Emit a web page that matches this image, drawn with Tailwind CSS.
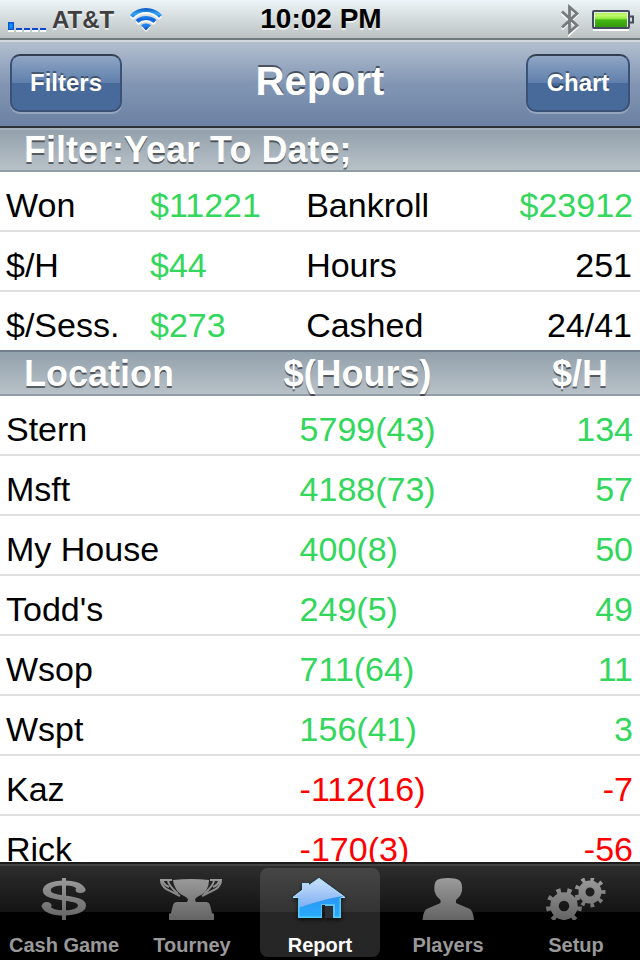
<!DOCTYPE html>
<html lang="en">
<head>
<meta charset="utf-8">
<meta name="viewport" content="width=device-width, initial-scale=1">
<title>Report</title>
<script src="https://cdn.jsdelivr.net/npm/@tailwindcss/browser@4"></script>
</head>
<body class="flex h-screen flex-col overflow-hidden bg-white font-['Liberation_Sans',Arial,sans-serif] text-black">

<!-- Status bar -->
<div class="grid h-10 shrink-0 grid-cols-[1fr_auto_1fr] items-center border-b-2 border-[#6f7b7e] bg-linear-to-b from-[#edf5f8] to-[#bcc2c2] pr-1.5 pl-2 font-bold [text-shadow:0_2px_0_rgba(255,255,255,.6)]">
  <div class="flex items-center">
    <svg class="h-10 w-10" viewBox="0 0 40 40" role="img" aria-label="Signal strength">
      <path d="M0 31h6M8 31h6M16 31h6M24 31h6M32 31h6" stroke="#fff" stroke-width="2"/>
      <path d="M8 29h6M16 29h6M24 29h6M32 29h6" stroke="#0b46cf" stroke-width="2"/>
      <path d="M.75 22.75h4.500v6.500H.75z" fill="#1497ff" stroke="#0b57d5" stroke-width="1.500"/>
    </svg>
    <span class="ml-1 text-2xl text-[#3f3f3f]">AT&amp;T</span>
    <svg class="ml-3.5 h-10 w-9" viewBox="0 0 36 40" role="img" aria-label="Wi-Fi">
      <defs><linearGradient id="wifi" gradientUnits="userSpaceOnUse" x1="0" y1="8" x2="0" y2="31"><stop offset="0" stop-color="#0a55c0"/><stop offset=".25" stop-color="#31a4f5"/><stop offset=".5" stop-color="#1263df"/><stop offset=".75" stop-color="#1e86f4"/><stop offset="1" stop-color="#0a3fc4"/></linearGradient></defs>
      <g transform="translate(0 2)" fill="none" stroke="#fff" stroke-width="4"><path d="M3.500 16.300a20 20 0 0 1 29 0"/><path d="M9 21.500a13 13 0 0 1 18 0"/><path d="M18 30l-4.500-4.800a7 7 0 0 1 9 0z" fill="#fff" stroke="none"/></g>
      <g fill="none" stroke="url(#wifi)" stroke-width="4"><path d="M3.500 16.300a20 20 0 0 1 29 0"/><path d="M9 21.500a13 13 0 0 1 18 0"/><path d="M18 30.500l-5-5.200a7.500 7.500 0 0 1 10 0z" fill="url(#wifi)" stroke="none"/></g>
    </svg>
  </div>
  <time class="pb-0.5 text-[28px] leading-9">10:02 PM</time>
  <div class="flex items-center justify-end gap-3">
    <svg class="h-10 w-5" viewBox="0 0 20 40" fill="none" stroke-width="2.800" role="img" aria-label="Bluetooth">
      <path d="M2 13.500L17 27 9.500 34V8L17 14.500 2 29" stroke="#fff"/>
      <path d="M2 11.500L17 25.500 9.500 32V7L17 13.500 2 27.500" stroke="#777a7c"/>
    </svg>
    <svg class="h-10 w-[42px]" viewBox="0 0 42 40" role="img" aria-label="Battery">
      <defs><linearGradient id="battery" x1="0" y1="0" x2="0" y2="1"><stop offset="0" stop-color="#a7ef4f"/><stop offset=".15" stop-color="#c5fa72"/><stop offset=".4" stop-color="#91ea3d"/><stop offset=".5" stop-color="#45b716"/><stop offset="1" stop-color="#349b0d"/></linearGradient></defs>
      <path d="M1 30h36" stroke="#fff" stroke-width="2"/>
      <path d="M38 16.500h3v6h-3" fill="none" stroke="#454c5c" stroke-width="2"/>
      <rect x="1" y="11" width="36" height="17" rx="1" fill="#e5efe4" stroke="#454a61" stroke-width="2"/>
      <rect x="3" y="13" width="32" height="14" fill="url(#battery)"/>
    </svg>
  </div>
</div>

<!-- Navigation bar -->
<header class="grid h-22 shrink-0 grid-cols-[1fr_auto_1fr] items-center border-t-2 border-b-2 border-t-[#d0d7df] border-b-[#2d3034] bg-linear-to-b from-[#b3bfcf] via-[#8296b4] to-[#6c81a3] px-2.5 pb-0.5 font-bold text-white">
  <button type="button" class="h-[58px] w-28 justify-self-start rounded-[10px] border-2 border-[#395275] border-t-[#333e50] bg-linear-to-b from-[#90a6c4] from-0% via-[#5f7fac] via-50% to-[#486a9b] to-50% text-2xl shadow-[0_2px_0_rgba(255,255,255,.25)] [text-shadow:0_-2px_0_rgba(0,0,0,.4)]">Filters</button>
  <h1 class="pb-1 text-[40px] leading-none [text-shadow:0_-2px_0_rgba(0,0,0,.5)]">Report</h1>
  <button type="button" class="h-[58px] w-[104px] justify-self-end rounded-[10px] border-2 border-[#395275] border-t-[#333e50] bg-linear-to-b from-[#90a6c4] from-0% via-[#5f7fac] via-50% to-[#486a9b] to-50% text-2xl shadow-[0_2px_0_rgba(255,255,255,.25)] [text-shadow:0_-2px_0_rgba(0,0,0,.4)]">Chart</button>
</header>

<main class="min-h-0 flex-1 overflow-hidden text-[34px] leading-10">
  <h2 class="h-11 border-t-2 border-b-2 border-t-[#a5b1bb] border-b-[#929da8] bg-linear-to-b from-[#93a1ac] to-[#b8c1c8] pl-6 text-4xl leading-10 font-bold text-white [text-shadow:0_2px_0_rgba(0,0,0,.5)]">Filter:Year To Date;</h2>

  <table class="w-full table-fixed border-separate border-spacing-0 [&_td]:border-[#e0e0e0] [&_td]:pt-2 [&_th]:border-[#e0e0e0] [&_th]:pt-2 [&_th]:pl-1.5 [&_th]:text-left [&_th]:font-normal" aria-label="Summary">
    <colgroup><col class="w-[22.5%]"><col class="w-[24.4%]"><col class="w-[25%]"><col></colgroup>
    <tbody>
      <tr class="h-15 *:border-b-2">
        <th scope="row">Won</th><td class="pl-1.5 text-[#32d75c]">$11221</td>
        <th scope="row">Bankroll</th><td class="pr-[7px] text-right text-[#32d75c]">$23912</td>
      </tr>
      <tr class="h-15 *:border-b-2">
        <th scope="row">$/H</th><td class="pl-1.5 text-[#32d75c]">$44</td>
        <th scope="row">Hours</th><td class="pr-2 text-right">251</td>
      </tr>
      <tr class="h-[58px]">
        <th scope="row">$/Sess.</th><td class="pl-1.5 text-[#32d75c]">$273</td>
        <th scope="row">Cashed</th><td class="pr-2 text-right">24/41</td>
      </tr>
    </tbody>
  </table>

  <table class="w-full table-fixed border-separate border-spacing-0" aria-label="Results by location">
    <colgroup><col class="w-[44%]"><col class="w-[34%]"><col></colgroup>
    <thead class="text-4xl leading-10 text-white [text-shadow:0_2px_0_rgba(0,0,0,.5)]">
      <tr class="h-[46px] *:border-t-2 *:border-b-2 *:border-t-[#71808b] *:border-b-[#929da8] *:bg-linear-to-b *:from-[#93a1ac] *:to-[#b8c1c8] *:pt-0.5">
        <th scope="col" class="pl-6 text-left font-bold">Location</th>
        <th scope="col" class="pl-0.5 text-left font-bold">$(Hours)</th>
        <th scope="col" class="pr-8 text-right font-bold">$/H</th>
      </tr>
    </thead>
    <tbody class="text-[#32d75c] [&_td]:border-b-2 [&_td]:border-[#e0e0e0] [&_td]:pt-2 [&_th]:border-b-2 [&_th]:border-[#e0e0e0] [&_th]:pt-2 [&_th]:pl-1.5 [&_th]:text-left [&_th]:font-normal [&_th]:text-black">
      <tr class="h-15"><th scope="row">Stern</th><td class="pl-[18px]">5799(43)</td><td class="pr-[7px] text-right">134</td></tr>
      <tr class="h-15"><th scope="row">Msft</th><td class="pl-[18px]">4188(73)</td><td class="pr-[7px] text-right">57</td></tr>
      <tr class="h-15"><th scope="row">My House</th><td class="pl-[18px]">400(8)</td><td class="pr-[7px] text-right">50</td></tr>
      <tr class="h-15"><th scope="row">Todd's</th><td class="pl-[18px]">249(5)</td><td class="pr-[7px] text-right">49</td></tr>
      <tr class="h-15"><th scope="row">Wsop</th><td class="pl-[18px]">711(64)</td><td class="pr-[7px] text-right">11</td></tr>
      <tr class="h-15"><th scope="row">Wspt</th><td class="pl-[18px]">156(41)</td><td class="pr-[7px] text-right">3</td></tr>
      <tr class="h-15 text-[#ff0000]"><th scope="row">Kaz</th><td class="pl-[18px]">-112(16)</td><td class="pr-[7px] text-right">-7</td></tr>
      <tr class="h-15 text-[#ff0000]"><th scope="row">Rick</th><td class="pl-[18px]">-170(3)</td><td class="pr-[7px] text-right">-56</td></tr>
    </tbody>
  </table>
</main>

<!-- Tab bar -->
<nav class="grid h-[98px] shrink-0 grid-cols-5 border-t-2 border-[#1c1c1c] bg-linear-to-b from-[#2e2e2e] from-0% via-[#141414] via-50% to-black to-50% text-xl leading-6 font-bold text-[#999] shadow-[inset_0_2px_0_#434343]">
  <a href="#cash" class="m-1 flex flex-col items-center pt-2.5">
    <svg class="mb-[13px] h-[42px] w-15" viewBox="0 0 60 42" aria-hidden="true">
      <defs><linearGradient id="grey" gradientUnits="userSpaceOnUse" x1="0" y1="0" x2="0" y2="42"><stop offset="0" stop-color="#9b9b9b"/><stop offset="1" stop-color="#646464"/></linearGradient></defs>
      <path d="M28 0h4v42h-4z" fill="url(#grey)"/>
      <g transform="scale(1.600 1)">
        <path fill="none" stroke="url(#grey)" stroke-width="5" d="M30 13C29 7 25 5 18.900 5 12 5 8 8 8 12.500 8 17 12 18.500 19 20c7 1.500 11 3 11 7.500 0 4.500-4.500 7.500-11.100 7.500C12 35 8 32.500 7 27"/>
        <ellipse cx="8" cy="27.500" rx="3" ry="3.500" fill="url(#grey)"/>
        <ellipse cx="29" cy="12" rx="3" ry="3" fill="url(#grey)"/>
      </g>
    </svg>
    <span>Cash Game</span>
  </a>
  <a href="#tourney" class="m-1 flex flex-col items-center pt-2.5">
    <svg class="mb-[13px] h-[42px] w-16" viewBox="0 0 64 42" aria-hidden="true">
      <path fill="url(#grey)" d="M13 2q18-2 36 0 0 5-2 9-3 5-8 7-4 2-4 4l1 2h10q3 0 4 3l2 8 2 1v6H9v-6l2-1 2-8q1-3 4-3h10l1-2q0-2-4-4-6-3-8-7-3-5-3-9z"/>
      <path fill="none" stroke="url(#grey)" stroke-width="2" d="M12 2H1q0 5 5 9l14 7M3 3q1 4 6 6M8 2q0 5 10 14M50 2h11q0 5-5 9l-14 7M59 3q-1 4-6 6M54 2q0 5-10 14"/>
    </svg>
    <span>Tourney</span>
  </a>
  <a href="#report" aria-current="page" class="m-1 flex flex-col items-center rounded-lg bg-linear-to-b from-[#464646] from-0% via-[#333] via-50% to-[#262626] to-50% pt-2.5 text-white">
    <svg class="mb-[13px] h-[42px] w-15 overflow-visible drop-shadow-[0_2px_2px_rgba(0,0,0,.7)]" viewBox="0 0 60 42" aria-hidden="true">
      <defs>
        <linearGradient id="home" x1="0" y1="0" x2="0" y2="1"><stop offset="0" stop-color="#2c83ed"/><stop offset="1" stop-color="#28aefd"/></linearGradient>
        <linearGradient id="sheen" x1="0" y1="0" x2="0" y2="1"><stop offset="0" stop-color="#c9e2fa"/><stop offset="1" stop-color="#7eaef2"/></linearGradient>
        <clipPath id="house"><path d="M3 19L12 12V5h7v2L29 0 55 19v1h-4v20H35V27h-3v13H8V20H3z"/></clipPath>
      </defs>
      <g clip-path="url(#house)">
        <path d="M0 0h60v42H0z" fill="url(#home)"/>
        <path d="M0 0h60v17Q35 20 8 30H0z" fill="url(#sheen)"/>
        <path d="M33 27h10v13H33z" fill="#2c3036"/>
        <path d="M32 40V27h12v13" fill="none" stroke="#56c4ef" stroke-width="2"/>
        <path d="M8 20v20h24M44 40h7V20" fill="none" stroke="#54cdfa" stroke-width="3"/>
        <path d="M3 19L12 12V5h7v2L29 0 55 19v1h-4M8 20H3z" fill="none" stroke="#a9dcf6" stroke-width="2"/>
      </g>
    </svg>
    <span>Report</span>
  </a>
  <a href="#players" class="m-1 flex flex-col items-center pt-2.5">
    <svg class="mb-[13px] h-[42px] w-15" viewBox="0 0 60 42" aria-hidden="true">
      <path fill="url(#grey)" d="M19 2q3-2 11-2t11 2q4 3 3 11-1 4-3 6l-3 3v3q2 1 7 3l7 3q3 2 4 11H4.500q1-9 4-11l7-3q5-2 7-3v-3l-3-3q-2-2-3-6-1-8 2.500-11z"/>
    </svg>
    <span>Players</span>
  </a>
  <a href="#setup" class="m-1 flex flex-col items-center pt-2.5">
    <svg class="mb-[13px] h-[42px] w-15" viewBox="0 0 60 42" fill="none" stroke="url(#grey)" aria-hidden="true">
      <circle cx="18" cy="28" r="9.500" stroke-width="8.500"/>
      <circle cx="18" cy="28" r="15" stroke-width="6" pathLength="90" stroke-dasharray="4 6" stroke-dashoffset="-.500"/>
      <circle cx="44" cy="14" r="8" stroke-width="7"/>
      <circle cx="44" cy="14" r="13" stroke-width="5" pathLength="90" stroke-dasharray="4 6" stroke-dashoffset="2"/>
    </svg>
    <span>Setup</span>
  </a>
</nav>
</body>
</html>
